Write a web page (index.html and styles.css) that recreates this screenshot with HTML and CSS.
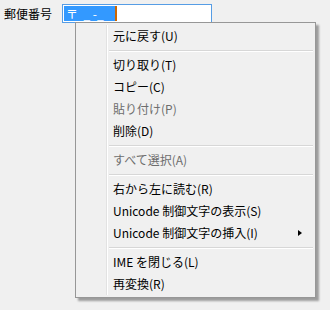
FILE: index.html
```html
<!DOCTYPE html>
<html lang="ja">
<head>
<meta charset="UTF-8">
<title>郵便番号</title>
<link rel="stylesheet" href="styles.css">
</head>
<body>

<div class="form-row">
    <span class="label">郵便番号</span>
    <div class="input">
        <span class="selected">〒&nbsp;&nbsp;_&nbsp;-_</span><span class="caret"></span>
    </div>
</div>

<!-- context menu -->
<div class="menu">
    <div class="item">元に戻す(U)</div>
    <div class="sep"></div>
    <div class="item">切り取り(T)</div>
    <div class="item">コピー(C)</div>
    <div class="item disabled">貼り付け(P)</div>
    <div class="item">削除(D)</div>
    <div class="sep"></div>
    <div class="item disabled">すべて選択(A)</div>
    <div class="sep"></div>
    <div class="item">右から左に読む(R)</div>
    <div class="item">Unicode 制御文字の表示(S)</div>
    <div class="item sub">Unicode 制御文字の挿入(I)<span class="arrow"></span></div>
    <div class="sep"></div>
    <div class="item">IME を閉じる(L)</div>
    <div class="item">再変換(R)</div>
</div>

</body>
</html>
```

FILE: styles.css
```css
*{
    box-sizing:border-box;
}

body{
    margin:0;
    width:330px;
    height:310px;
    background:#f0f0f0;
    font-family:"Noto Sans CJK JP", "Noto Sans", sans-serif;
    font-size:12px;
    color:#000;
    position:relative;
    overflow:hidden;
}

.form-row{
    display:flex;
    align-items:center;
    padding:4px 0 0 4px;
    gap:10px;
}

.label{
    line-height:19px;
}

.input{
    width:150px;
    height:19px;
    border:1px solid #569de5;
    background:#fff;
    display:flex;
    align-items:center;
    padding-left:1px;
}

.selected{
    display:inline-block;
    width:51px;
    background:#3399ff;
    color:#fff;
    height:15px;
    line-height:15px;
    padding:0 2px;
    white-space:pre;
}

.caret{
    width:2px;
    height:15px;
    background:#cc6600;
}

/* menu */
.menu{
    position:absolute;
    left:75px;
    top:22px;
    width:241px;
    padding:2px;
    background:#f0f0f0;
    border:1px solid #979797;
    box-shadow:3px 3px 2px rgba(0,0,0,0.35);
}

.menu::before{
    content:"";
    position:absolute;
    left:30px;
    top:2px;
    bottom:2px;
    width:1px;
    background:#e2e2e2;
    border-right:1px solid #fff;
}

.item{
    height:22px;
    line-height:22px;
    padding-left:35px;
    position:relative;
    white-space:nowrap;
}

.item.disabled{
    color:#6d6d6d;
}

.sep{
    height:7px;
    margin-left:31px;
    position:relative;
}

.sep::after{
    content:"";
    position:absolute;
    left:0;
    right:0;
    top:3px;
    height:1px;
    background:#d7d7d7;
    border-bottom:1px solid #fff;
    box-sizing:content-box;
}

.arrow{
    position:absolute;
    right:11px;
    top:8px;
    width:0;
    height:0;
    border-top:3.5px solid transparent;
    border-bottom:3.5px solid transparent;
    border-left:4px solid #000;
}
```
